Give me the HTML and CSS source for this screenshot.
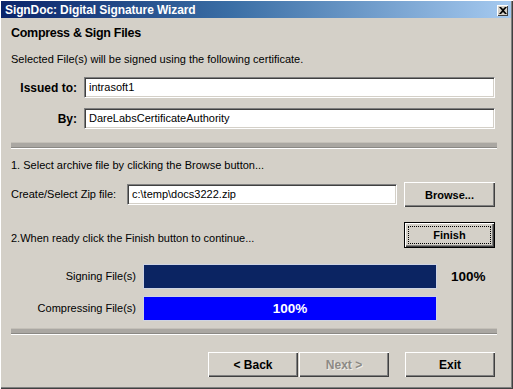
FILE: index.html
```html
<!DOCTYPE html>
<html>
<head>
<meta charset="utf-8">
<link rel="stylesheet" href="styles.css">
</head>
<body>
<div class="window">
  <div class="titlebar">
    <span class="title">SignDoc: Digital Signature Wizard</span>
    <span class="close"><svg width="8" height="7" viewBox="0 0 8 7"><path d="M0 0h2l2 2 2-2h2L5 3.5 8 7H6L4 5 2 7H0l3-3.5z" fill="#000"/></svg></span>
  </div>
  <div class="content">
    <div class="heading">Compress &amp; Sign Files</div>
    <div class="text intro">Selected File(s) will be signed using the following certificate.</div>
    <div class="field first">
      <span class="flabel">Issued to:</span>
      <span class="input wide">intrasoft1</span>
    </div>
    <div class="field second">
      <span class="flabel">By:</span>
      <span class="input wide">DareLabsCertificateAuthority</span>
    </div>
    <div class="sep sep1"></div>
    <div class="text step1">1. Select archive file by clicking the Browse button...</div>
    <div class="ziprow">
      <span class="text ziplabel">Create/Select Zip file:</span>
      <span class="input zip">c:\temp\docs3222.zip</span>
      <span class="btn">Browse...</span>
    </div>
    <div class="finishrow">
      <span class="text step2">2.When ready click the Finish button to continue...</span>
      <span class="btn default"><span class="focus">Finish</span></span>
    </div>
    <div class="prow p1">
      <span class="text plabel">Signing File(s)</span>
      <span class="bar navy"></span>
      <span class="pct">100%</span>
    </div>
    <div class="prow p2">
      <span class="text plabel">Compressing File(s)</span>
      <span class="bar blue">100%</span>
    </div>
    <div class="sep sep2"></div>
    <div class="buttons">
      <span class="btn nav">&lt; Back</span>
      <span class="btn nav disabled">Next &gt;</span>
      <span class="btn nav exit">Exit</span>
    </div>
  </div>
</div>
</body>
</html>
```
FILE: styles.css
```css
html, body {
  margin: 0;
  padding: 0;
  background: #d4d0c8;
}
.window {
  width: 513px;
  height: 389px;
  box-sizing: border-box;
  background: #d4d0c8;
  padding: 1px 2px 2px 1px;
  box-shadow: inset 1px 1px #ffffff, inset -1px -1px #404040, inset -2px -2px #808080;
  display: flex;
  flex-direction: column;
  font-family: "Liberation Sans", Arial, sans-serif;
  color: #000;
}
.titlebar {
  height: 17px;
  background: linear-gradient(to right, #0a246a 0%, #3a6ea5 45%, #a6caf0 100%);
  display: flex;
  align-items: center;
  justify-content: space-between;
  padding: 0 3px 0 4px;
}
.title {
  color: #fff;
  font-weight: bold;
  font-size: 12px;
  letter-spacing: -0.1px;
}
.close {
  width: 11px;
  height: 11px;
  box-sizing: border-box;
  background: #d4d0c8;
  box-shadow: inset 1px 1px #ffffff, inset -1px -1px #404040;
  display: flex;
  align-items: center;
  justify-content: center;
  margin-top: 2px;
}
.content {
  flex: 1;
  padding: 8px 16px 0 10px;
  display: flex;
  flex-direction: column;
}
.heading {
  font-weight: bold;
  font-size: 12.5px;
  line-height: 15px;
  letter-spacing: -0.3px;
}
.text {
  font-size: 11px;
  line-height: 13px;
}
.intro { margin-top: 12px; }
.field {
  display: flex;
  align-items: center;
  gap: 7px;
}
.field.first { margin-top: 11px; }
.field.second { margin-top: 10px; }
.flabel {
  width: 66px;
  text-align: right;
  font-weight: bold;
  font-size: 12px;
}
.input {
  height: 21px;
  box-sizing: border-box;
  background: #fff;
  border-top: 1px solid #808080;
  border-left: 1px solid #808080;
  border-bottom: 1px solid #ffffff;
  border-right: 1px solid #ffffff;
  box-shadow: inset 1px 1px #404040, inset -1px -1px #d4d0c8;
  font-size: 11px;
  line-height: 19px;
  padding-left: 4px;
}
.wide { width: 411px; }
.sep {
  height: 7px;
  box-sizing: border-box;
  background: #aaa7a2;
  border-top: 1px solid #c4c0b8;
  border-bottom: 1px solid #ffffff;
  box-shadow: inset 0 -1px #8a8884;
  margin-right: -2px;
}
.sep1 { margin-top: 13px; }
.step1 { margin-top: 10px; }
.ziprow {
  margin-top: 10px;
  display: flex;
  align-items: center;
}
.ziplabel { width: 116px; }
.input.zip {
  width: 270px;
  height: 21px;
  margin-right: 7px;
}
.btn {
  width: 91px;
  height: 25px;
  box-sizing: border-box;
  background: #d4d0c8;
  box-shadow: inset 1px 1px #ffffff, inset -1px -1px #404040, inset -2px -2px #808080;
  display: flex;
  align-items: center;
  justify-content: center;
  font-weight: bold;
  font-size: 11px;
}
.finishrow {
  margin-top: 15px;
  display: flex;
  justify-content: space-between;
  align-items: center;
}
.step2 { padding-top: 6px; }
.btn.default {
  height: 26px;
  border: 1px solid #000;
  box-shadow: inset 1px 1px #ffffff, inset -1px -1px #404040, inset -2px -2px #808080;
  padding: 3px;
}
.focus {
  flex: 1;
  align-self: stretch;
  border: 1px dotted #000;
  display: flex;
  align-items: center;
  justify-content: center;
}
.prow {
  display: flex;
  align-items: center;
}
.p1 { margin-top: 16px; }
.p2 { margin-top: 7px; }
.plabel {
  width: 125px;
  text-align: right;
  margin-right: 7px;
}
.bar {
  width: 294px;
  height: 25px;
  box-sizing: border-box;
  border: 1px solid #cfd4e4;
  display: flex;
  align-items: center;
  justify-content: center;
}
.navy { background: #0b2462; }
.blue {
  background: #0000ff;
  color: #fff;
  font-weight: bold;
  font-size: 13.5px;
}
.pct {
  margin-left: 14px;
  font-weight: bold;
  font-size: 13.5px;
}
.sep2 { margin-top: 7px; }
.buttons {
  margin-top: 17px;
  display: flex;
  justify-content: flex-end;
}
.btn.nav { width: 90px; font-size: 12px; }
.btn.disabled {
  margin-left: 1px;
  color: #8d8a85;
  text-shadow: 1px 1px #f0eee8;
}
.btn.exit { margin-left: 16px; }
```
